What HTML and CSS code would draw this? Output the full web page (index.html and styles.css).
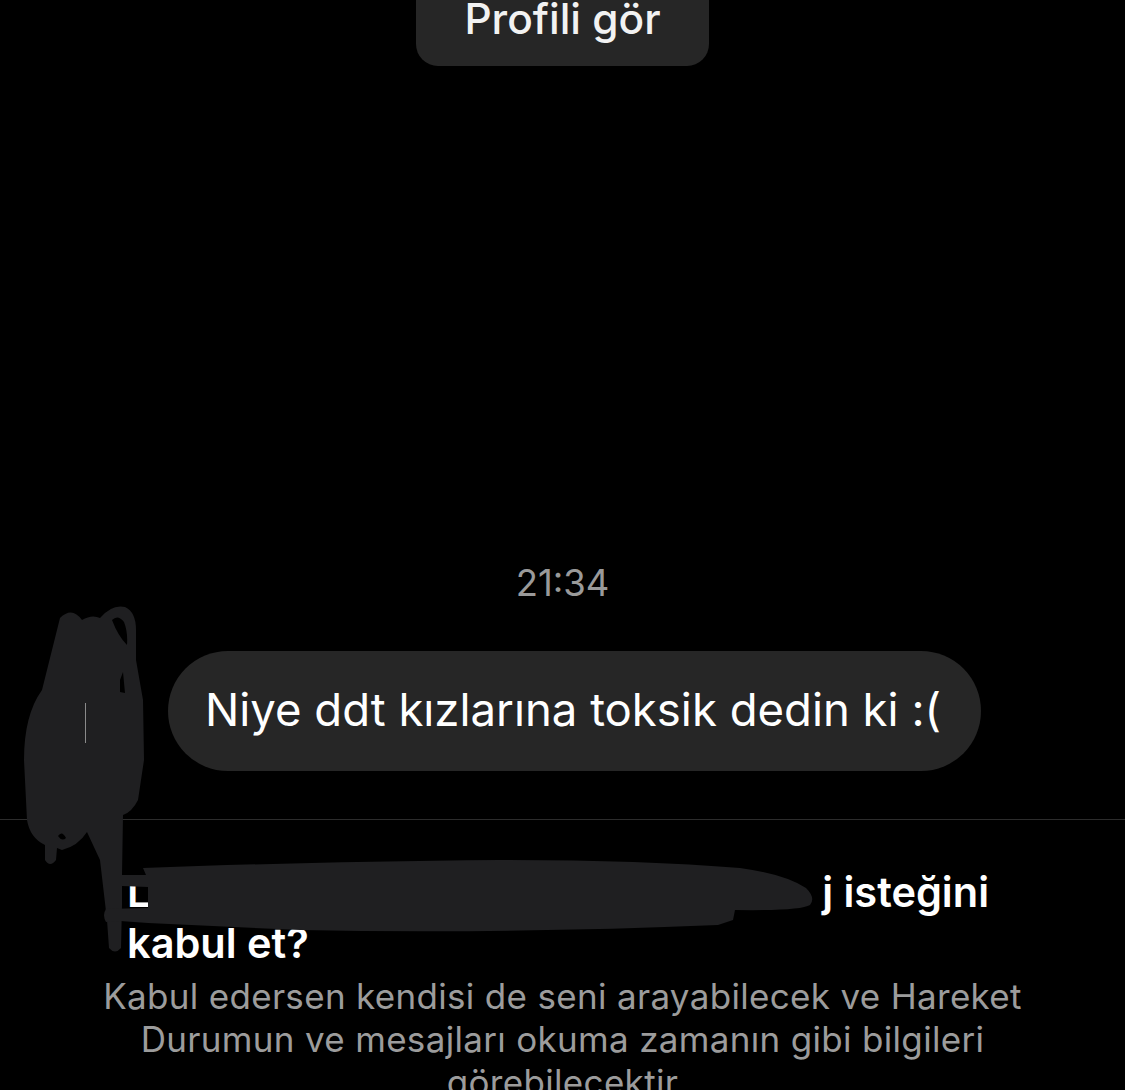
FILE: index.html
```html
<!DOCTYPE html>
<html>
	<head>
		<meta charset="utf-8" />
		<title>Mesaj isteği</title>
		<link rel="stylesheet" href="styles.css">
	</head>
	<body class="main">
		<div class="profile-btn">Profili gör</div>
		<p class="time">21:34</p>
		<div class="message-row">
			<div class="bubble">Niye ddt kızlarına toksik dedin ki :(</div>
		</div>
		<section class="request">
			<h2 class="request-title">
				<span class="title-line"><span>L</span><span>j isteğini</span></span>
				<span class="title-line">kabul et?</span>
			</h2>
			<p class="request-text">Kabul edersen kendisi de seni arayabilecek ve Hareket Durumun ve mesajları okuma zamanın gibi bilgileri görebilecektir</p>
		</section>
		<!-- scribbles drawn over the avatar and the name -->
		<svg class="scribble" width="1125" height="1090" viewBox="0 0 1125 1090">
			<path fill-rule="evenodd" d="M52 650 L60 618 Q72 606 82 620 Q92 614 100 618 Q112 604 125 607 Q136 612 136 630 L136 660 L143 700 L144 760 L138 800 Q132 812 123 815 L122 875 L122 905 L121 948 Q115 955 109 948 L107 920 L100 860 L87 832 Q78 846 62 850 L57 848 L56 860 Q50 868 45 860 L45 845 Q30 838 27 820 L24 760 Q24 715 42 690 Z M112 620 Q118 614 124 622 Q128 632 127 645 Q118 636 112 620 Z M120 680 L123 672 L125 693 L120 692 Z M58 836 Q62 830 66 838 Q62 842 58 836 Z"/>
			<path d="M122 875 L146 875 L143 868 Q300 862 500 860 Q640 860 740 868 Q785 874 806 888 Q816 898 810 905 Q800 911 735 910 L733 920 L718 925 Q500 934 300 930 L148 923 L120 921 L106 922 Q102 915 106 909 L148 908 L148 887 L122 886 Z"/>
			<path class="scribble-gap" d="M85.5 703 L85.5 743"/>
		</svg>
	</body>
</html>
```
FILE: styles.css
```css
:root {
	--font-family: "Inter", "Liberation Sans", sans-serif;
	--bubble-color: #262626;
	--scribble-color: #1f1f21;
}

body {
	margin: 0;
	padding: 0;
	background-color: #000;
	color: #fff;
	font-family: var(--font-family);
	width: 1125px;
	height: 1090px;
	overflow: hidden;
}

.main {
	position: relative;
	display: flex;
	flex-direction: column;
	align-items: center;
}

.main > * {
	flex-shrink: 0;
}

.profile-btn {
	width: 293px;
	height: 66px;
	box-sizing: border-box;
	background-color: var(--bubble-color);
	border-radius: 0 0 22px 22px;
	text-align: center;
	font-size: 42.4px;
	font-weight: 500;
	line-height: 38px;
	color: #f2f2f2;
}

.time {
	margin: 497px 0 0;
	font-size: 36.5px;
	line-height: 40px;
	color: #9a9a9a;
}

.message-row {
	margin-top: 48px;
	width: 100%;
	display: flex;
	padding-left: 168px;
	box-sizing: border-box;
}

.bubble {
	width: 813px;
	height: 120px;
	box-sizing: border-box;
	padding: 0 37px;
	background-color: var(--bubble-color);
	border-radius: 60px;
	font-size: 45.5px;
	line-height: 118px;
	white-space: nowrap;
}

.request {
	margin-top: 48px;
	width: 100%;
	border-top: 1px solid #2c2c2c;
	box-sizing: border-box;
	padding: 47px 100px 0;
}

.request-title {
	margin: 0;
	padding: 0 36px 0 27px;
	font-size: 41.5px;
	font-weight: 600;
	line-height: 51px;
}

.title-line {
	display: flex;
	justify-content: space-between;
}

.request-text {
	margin: 6px 0 0;
	font-size: 35px;
	line-height: 43px;
	letter-spacing: 0.32px;
	text-align: center;
	color: #9c9c9c;
}

.scribble {
	position: absolute;
	top: 0;
	left: 0;
	fill: var(--scribble-color);
}

.scribble-gap {
	stroke: #8a8a8a;
	stroke-width: 1;
}
```
